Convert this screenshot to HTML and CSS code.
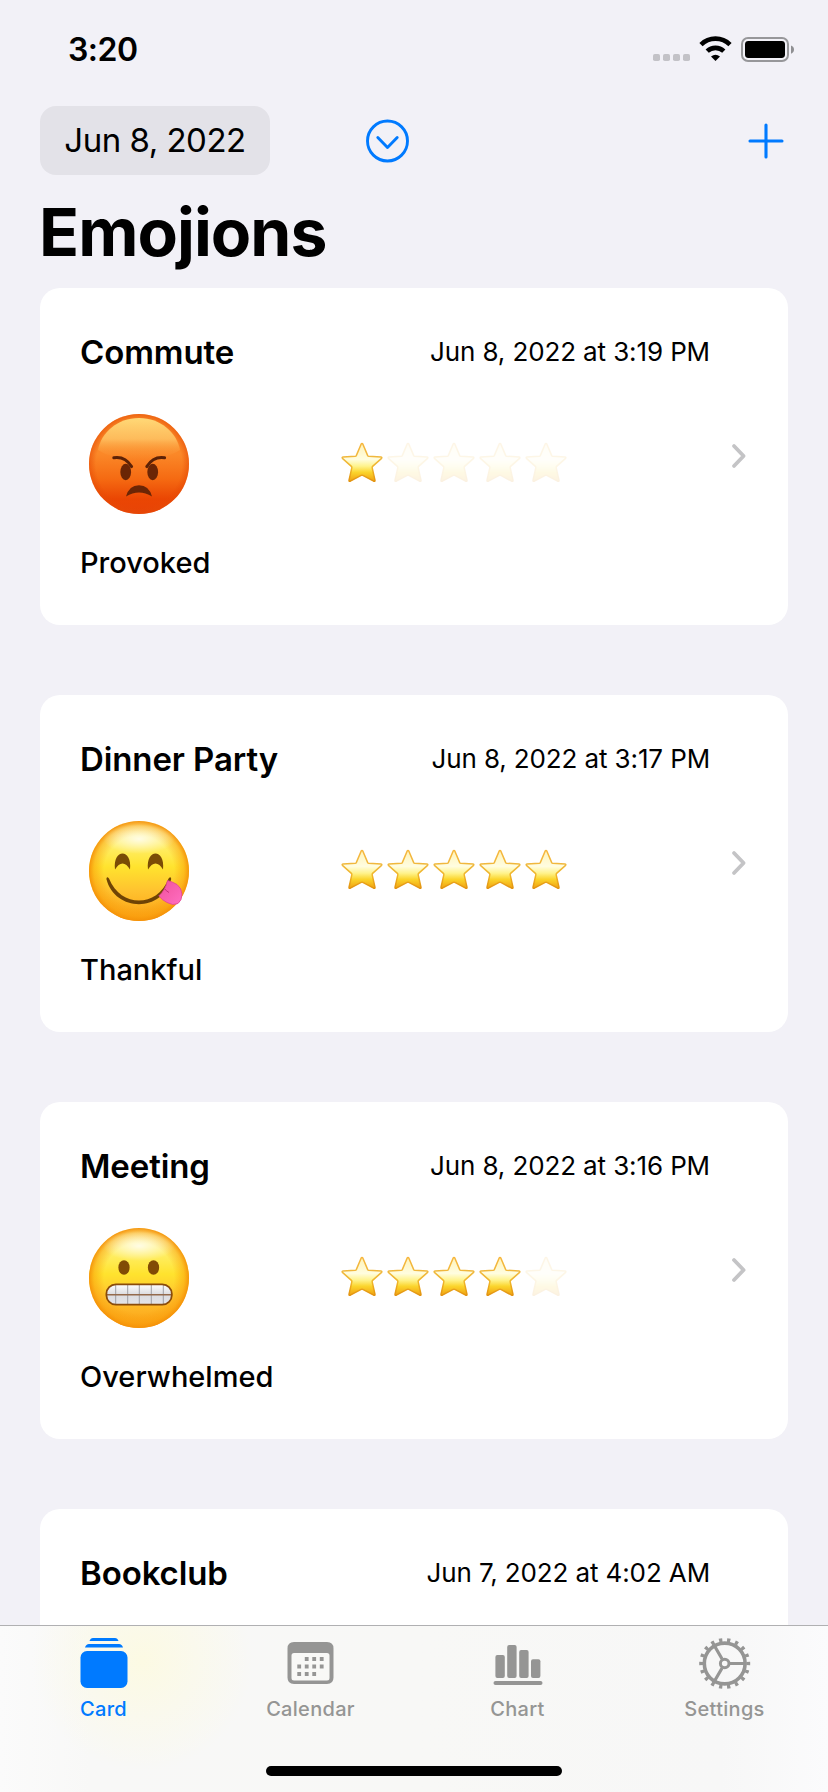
FILE: index.html
```
<!DOCTYPE html>
<html lang="en">
<head>
<meta charset="utf-8">
<title>Emojions</title>
<link rel="stylesheet" href="styles.css">
</head>
<body>
<svg class="defs" width="0" height="0" aria-hidden="true">
  <defs>
    <linearGradient id="starFill" x1="0" y1="0" x2="0" y2="1">
      <stop offset="0" stop-color="#fff3b8"/><stop offset=".42" stop-color="#fffde0"/><stop offset=".6" stop-color="#fff38c"/><stop offset=".76" stop-color="#fbd52c"/><stop offset="1" stop-color="#f0a010"/>
    </linearGradient>
    <linearGradient id="starEdge" x1="0" y1="0" x2="0" y2="1">
      <stop offset="0" stop-color="#f6b63c"/><stop offset=".4" stop-color="#efb83e"/><stop offset=".65" stop-color="#f0b62a"/><stop offset="1" stop-color="#e2920f"/>
    </linearGradient>
    <linearGradient id="angryFill" x1="0" y1="0" x2="0" y2="1">
      <stop offset="0" stop-color="#f98a26"/><stop offset=".4" stop-color="#fb8828"/><stop offset=".65" stop-color="#f56a12"/><stop offset=".85" stop-color="#ea4603"/><stop offset="1" stop-color="#e84307"/>
    </linearGradient>
    <linearGradient id="angryGloss" x1="0" y1="0" x2="0" y2="1">
      <stop offset="0" stop-color="#ffd977"/><stop offset=".5" stop-color="#fec464" stop-opacity=".85"/><stop offset="1" stop-color="#fb8c2c" stop-opacity="0"/>
    </linearGradient>
    <radialGradient id="angryRim"><stop offset=".86" stop-color="#e64a05" stop-opacity="0"/><stop offset="1" stop-color="#e64a05" stop-opacity=".6"/></radialGradient>
    <linearGradient id="sunFill" x1="0" y1="0" x2="0" y2="1">
      <stop offset="0" stop-color="#fff6b0"/><stop offset=".22" stop-color="#fff070"/><stop offset=".46" stop-color="#ffe32e"/><stop offset=".7" stop-color="#ffc22f"/><stop offset="1" stop-color="#fb9f14"/>
    </linearGradient>
    <radialGradient id="sunRim"><stop offset=".7" stop-color="#f79a08" stop-opacity="0"/><stop offset=".9" stop-color="#f99c08" stop-opacity=".5"/><stop offset="1" stop-color="#f49008" stop-opacity=".95"/></radialGradient>
    <radialGradient id="sunGloss"><stop offset="0" stop-color="#fff" stop-opacity=".8"/><stop offset="1" stop-color="#fff" stop-opacity="0"/></radialGradient>
    <linearGradient id="teeth" x1="0" y1="0" x2="0" y2="1"><stop offset="0" stop-color="#fff"/><stop offset=".5" stop-color="#dcdce0"/><stop offset="1" stop-color="#e4e4e8"/></linearGradient>
    <linearGradient id="tongueFill" x1="0" y1="0" x2="1" y2="1"><stop offset="0" stop-color="#f0509a"/><stop offset="1" stop-color="#ff6fc2"/></linearGradient>
    <symbol id="star" viewBox="0 0 46 42">
      <path d="M22.1 2.2Q23 .6 23.9 2.2L28.7 13.6Q29 14.2 29.8 14.3L42 15Q43.6 15.4 42.3 16.6L33.6 24.4Q33 25 33.2 25.8L36 38.3Q36 39.8 34.7 39.2L23.800 33.4Q23 33 22.2 33.4L11.3 39.2Q10 39.8 10 38.3L12.8 25.8Q13 25 12.4 24.4L3.7 16.6Q2.4 15.4 4 15L16.2 14.3Q17 14.2 17.3 13.6Z" fill="url(#starFill)" stroke="url(#starEdge)" stroke-width="1.5" stroke-linejoin="round"/>
    </symbol>
    <symbol id="chevron" viewBox="0 0 16 26">
      <path d="M3 3L12.6 13L3 23" fill="none" stroke="#c4c4c6" stroke-width="3.800" stroke-linecap="round" stroke-linejoin="round"/>
    </symbol>
    <symbol id="sunFace" viewBox="0 0 100 100">
      <circle cx="50" cy="50" r="50" fill="url(#sunFill)"/><circle cx="50" cy="50" r="50" fill="url(#sunRim)"/><ellipse cx="50" cy="18" rx="36" ry="15" fill="url(#sunGloss)"/>
    </symbol>
  </defs>
</svg>
<div class="screen">
  <div class="scene">
    <header class="status">
      <span class="clock">3:20</span>
      <svg class="status-icons" width="144" height="28" viewBox="0 0 144 28">
        <g fill="#c3c2c7"><rect x="1" y="18" width="7" height="7" rx="1.8"/><rect x="11" y="18" width="7" height="7" rx="1.8"/><rect x="21" y="18" width="7" height="7" rx="1.8"/><rect x="31" y="18" width="7" height="7" rx="1.8"/></g>
        <g fill="none" stroke="#000" stroke-width="4.6"><path d="M49 8.6A20.6 20.6 0 0 1 78 8.6"/><path d="M55.2 15.2A12 12 0 0 1 71.8 15.2"/></g>
        <path d="M63.5 25L59 20.5Q63.5 16.8 68 20.5Z"/>
        <rect x="90" y="2" width="46" height="23" rx="6" fill="none" stroke="#97979a" stroke-width="2"/>
        <rect x="93" y="5" width="40" height="17" rx="3.4"/>
        <path d="M139 9.5Q142 10.5 142 13.5T139 17.7Z" fill="#8f8f92"/>
      </svg>
    </header>
    <nav class="toolbar">
      <button class="date-pill"><span>Jun 8, 2022</span></button>
      <svg class="expand" width="44" height="44" viewBox="0 0 44 44" fill="none" stroke="#007aff" stroke-width="2.9" stroke-linecap="round" stroke-linejoin="round"><circle cx="21.5" cy="22" r="20"/><path d="M11.8 18.5L21.5 28.500L31.2 18.500"/></svg>
      <svg class="add" width="36" height="36" viewBox="0 0 36 36" stroke="#007aff" stroke-width="3.1" stroke-linecap="round"><path d="M2 18H34M18 2V34"/></svg>
    </nav>
    <h1 class="heading">Emojions</h1>
    <main class="list">
      <article class="card">
        <div class="card-top"><h2>Commute</h2><time>Jun 8, 2022 at 3:19 PM</time></div>
        <div class="card-mid">
          <svg class="face" viewBox="0 0 100 100">
            <circle cx="50" cy="50" r="50" fill="url(#angryFill)"/><circle cx="50" cy="50" r="50" fill="url(#angryRim)"/>
            <path d="M50 4C72 4 88 19 91 36C80 43 65 46 50 46S20 43 9 36C12 19 28 4 50 4Z" fill="url(#angryGloss)"/>
            <g fill="#6b2505"><ellipse cx="36.7" cy="58" rx="5.4" ry="8.3"/><ellipse cx="63.7" cy="58" rx="5.4" ry="8.3"/><path d="M37 82.5Q40 71.2 50 71.2T63 82.5Q50 74.5 37 82.5Z"/></g>
            <path d="M24.8 43.8Q36 42 42.6 52.6M75.6 43.8Q64.4 42 57.8 52.6" fill="none" stroke="#5c2106" stroke-width="3" stroke-linecap="round"/>
          </svg>
          <div class="stars"><svg><use href="#star"/></svg><svg class="off"><use href="#star"/></svg><svg class="off"><use href="#star"/></svg><svg class="off"><use href="#star"/></svg><svg class="off"><use href="#star"/></svg></div>
          <svg class="go"><use href="#chevron"/></svg>
        </div>
        <p class="mood">Provoked</p>
      </article>
      <article class="card">
        <div class="card-top"><h2>Dinner Party</h2><time>Jun 8, 2022 at 3:17 PM</time></div>
        <div class="card-mid">
          <svg class="face" viewBox="0 0 100 100">
            <use href="#sunFace"/>
            <path d="M26 48.500C23.500 27 43.500 27 41 48.500Q37.500 42.500 33.600 42.500Q29.500 42.500 26 48.500ZM59 48.500C56.500 27 76.500 27 74 48.500Q70.500 42.500 66.500 42.500Q62.500 42.500 59 48.500Z" fill="#7a4c05"/>
            <path d="M17.4 58Q17.6 55 20 57.4C32 87 68 87 79.6 57.4Q82 55 82.2 58C74 91.5 26 91.5 17.4 58Z" fill="#6f4305"/>
            <path d="M78.500 59.500Q83 60.500 88 63.500Q92.500 67 93 73Q93 79.500 89 82.500Q84 85 78 81.500Q73 79 69.800 75Q76.500 69 78.500 59.500Z" fill="url(#tongueFill)" stroke="#e04592" stroke-width=".8"/>
            <path d="M75.500 67.500Q77 70 80 71.500" fill="none" stroke="#c9317b" stroke-width="1"/>
          </svg>
          <div class="stars"><svg><use href="#star"/></svg><svg><use href="#star"/></svg><svg><use href="#star"/></svg><svg><use href="#star"/></svg><svg><use href="#star"/></svg></div>
          <svg class="go"><use href="#chevron"/></svg>
        </div>
        <p class="mood">Thankful</p>
      </article>
      <article class="card">
        <div class="card-top"><h2>Meeting</h2><time>Jun 8, 2022 at 3:16 PM</time></div>
        <div class="card-mid">
          <svg class="face" viewBox="0 0 100 100">
            <use href="#sunFace"/>
            <g fill="#814b05"><ellipse cx="35" cy="39.500" rx="5.600" ry="7.300"/><ellipse cx="64.500" cy="39.500" rx="5.600" ry="7.300"/></g>
            <rect x="17.400" y="56.300" width="65.400" height="20.400" rx="9.500" fill="url(#teeth)"/>
            <path d="M26.700 57V76M38.700 57V76M50.300 57V76M62.300 57V76M74.300 57V76" stroke="#96969c" stroke-width=".9"/>
            <path d="M18 66.700H82" stroke="#946a4c" stroke-width="1.600"/>
            <rect x="17.400" y="56.300" width="65.400" height="20.400" rx="9.500" fill="none" stroke="#8a4b0a" stroke-width="1.800"/>
          </svg>
          <div class="stars"><svg><use href="#star"/></svg><svg><use href="#star"/></svg><svg><use href="#star"/></svg><svg><use href="#star"/></svg><svg class="off"><use href="#star"/></svg></div>
          <svg class="go"><use href="#chevron"/></svg>
        </div>
        <p class="mood">Overwhelmed</p>
      </article>
      <article class="card">
        <div class="card-top"><h2>Bookclub</h2><time>Jun 7, 2022 at 4:02 AM</time></div>
      </article>
    </main>
  </div>
  <footer class="tabbar">
    <div class="tabs">
      <a class="tab active">
        <svg width="56" height="56" viewBox="0 0 56 56" fill="currentColor"><path d="M13.500 6Q14.500 3 17 3H39Q41.500 3 42.500 6ZM9 12.500Q10 9 13 9H43Q46 9 47 12.500Z"/><rect x="4.500" y="16" width="47" height="37" rx="6.500"/></svg>
        <span>Card</span>
      </a>
      <a class="tab">
        <svg width="56" height="56" viewBox="0 0 56 56" fill="currentColor"><path fill-rule="evenodd" d="M11 7H44Q50.500 7 50.500 13.500V42.500Q50.500 49 44 49H11Q4.500 49 4.500 42.500V13.500Q4.500 7 11 7ZM11 18Q8.500 18 8.500 20.500V43Q8.500 45.500 11 45.500H44Q46.500 45.500 46.500 43V20.500Q46.500 18 44 18Z"/>
        <path stroke="currentColor" stroke-width="3.800" stroke-dasharray="3.800 3.700" fill="none" d="M21.800 24H40.600M14.300 31.500H40.600M14.300 39H33.100"/></svg>
        <span>Calendar</span>
      </a>
      <a class="tab">
        <svg width="56" height="56" viewBox="0 0 56 56" fill="currentColor"><rect x="5.400" y="20" width="9.400" height="23" rx="2"/><rect x="17.200" y="10" width="9.400" height="33" rx="2"/><rect x="29.200" y="15" width="9.400" height="28" rx="2"/><rect x="41" y="24.300" width="9.400" height="18.700" rx="2"/><rect x="3.500" y="46" width="49" height="4" rx="2"/></svg>
        <span>Chart</span>
      </a>
      <a class="tab">
        <svg width="56" height="56" viewBox="0 0 56 56" fill="none" stroke="currentColor"><circle cx="27.700" cy="28.500" r="20.400" stroke-width="3.600"/><circle cx="27.700" cy="28.500" r="23.600" stroke-width="3.800" pathLength="360" stroke-dasharray="8 12" stroke-dashoffset="4"/><circle cx="27.700" cy="28.500" r="4.300" stroke-width="3"/><path stroke-width="3.200" d="M33 28.500H47.500M25.100 24L17.700 11.200M25.100 33L17.700 45.800"/></svg>
        <span>Settings</span>
      </a>
    </div>
    <div class="home"></div>
  </footer>
</div>
</body>
</html>
```
FILE: styles.css
```
* { box-sizing: border-box; margin: 0; padding: 0; }
body { width: 828px; height: 1792px; overflow: hidden; background: #f2f1f7; color: #000; font-family: Inter, "Liberation Sans", sans-serif; }
svg { display: block; flex: none; }
.defs { position: absolute; }
.screen { display: flex; flex-direction: column; height: 1792px; }
.scene { flex: 1; min-height: 0; overflow: hidden; padding: 0 40px; }
.status { display: flex; justify-content: space-between; height: 106px; padding: 36px 0 0 28px; }
.clock { font-size: 32px; line-height: 28px; font-weight: 600; letter-spacing: -0.5px; }
.status-icons { margin-right: -8px; }
.toolbar { display: flex; align-items: center; height: 69px; }
.date-pill { width: 230px; height: 69px; border: 0; border-radius: 16px; background: #e3e2e8; color: #000; font: 400 33px/69px Inter, sans-serif; letter-spacing: -0.5px; white-space: nowrap; }
.expand { margin-left: 96px; }
.add { margin-left: auto; margin-right: 4px; }
.heading { height: 113px; padding-top: 17px; font-size: 66px; line-height: 80px; font-weight: 700; letter-spacing: -0.95px; margin-left: -1px; }
.list { display: flex; flex-direction: column; gap: 70px; }
.card { flex: none; height: 337px; padding: 36px 36px 0 40px; border-radius: 20px; background: #fff; }
.card-top { display: flex; align-items: center; justify-content: space-between; height: 56px; padding-right: 42px; white-space: nowrap; }
h2 { font-size: 33px; line-height: 56px; font-weight: 600; letter-spacing: -0.1px; }
time { font-size: 26px; line-height: 56px; letter-spacing: -0.12px; }
.card-mid { display: flex; height: 100px; margin: 34px 0 29px 9px; }
.face { width: 100px; height: 100px; }
.stars { display: flex; margin: 28px 0 0 150px; }
.stars svg { width: 46px; height: 42px; }
.stars .off { opacity: .12; }
.go { width: 16px; height: 26px; margin: 29px 5px 0 auto; }
.mood { font-size: 29px; line-height: 40px; font-weight: 500; }
.tabbar { height: 167px; border-top: 1px solid #b0b0b2; background: radial-gradient(ellipse 110px 110px at 142px 35px, #fcfae3, #fcfae300), linear-gradient(90deg, #fbfbfb 0, #f8f8f7 90px, #f8f8f6 420px, #f7f7f7 720px, #fbfbfc 828px); }
.tabs { display: flex; height: 140px; }
.tab { flex: 1; display: flex; flex-direction: column; align-items: center; padding-top: 9px; color: #959594; }
.tab span { font-size: 20px; line-height: 24px; font-weight: 500; margin-top: 6px; letter-spacing: .3px; }
.active { color: #007aff; }
.home { width: 296px; height: 10px; margin: 0 auto; border-radius: 5px; background: #000; }
```
